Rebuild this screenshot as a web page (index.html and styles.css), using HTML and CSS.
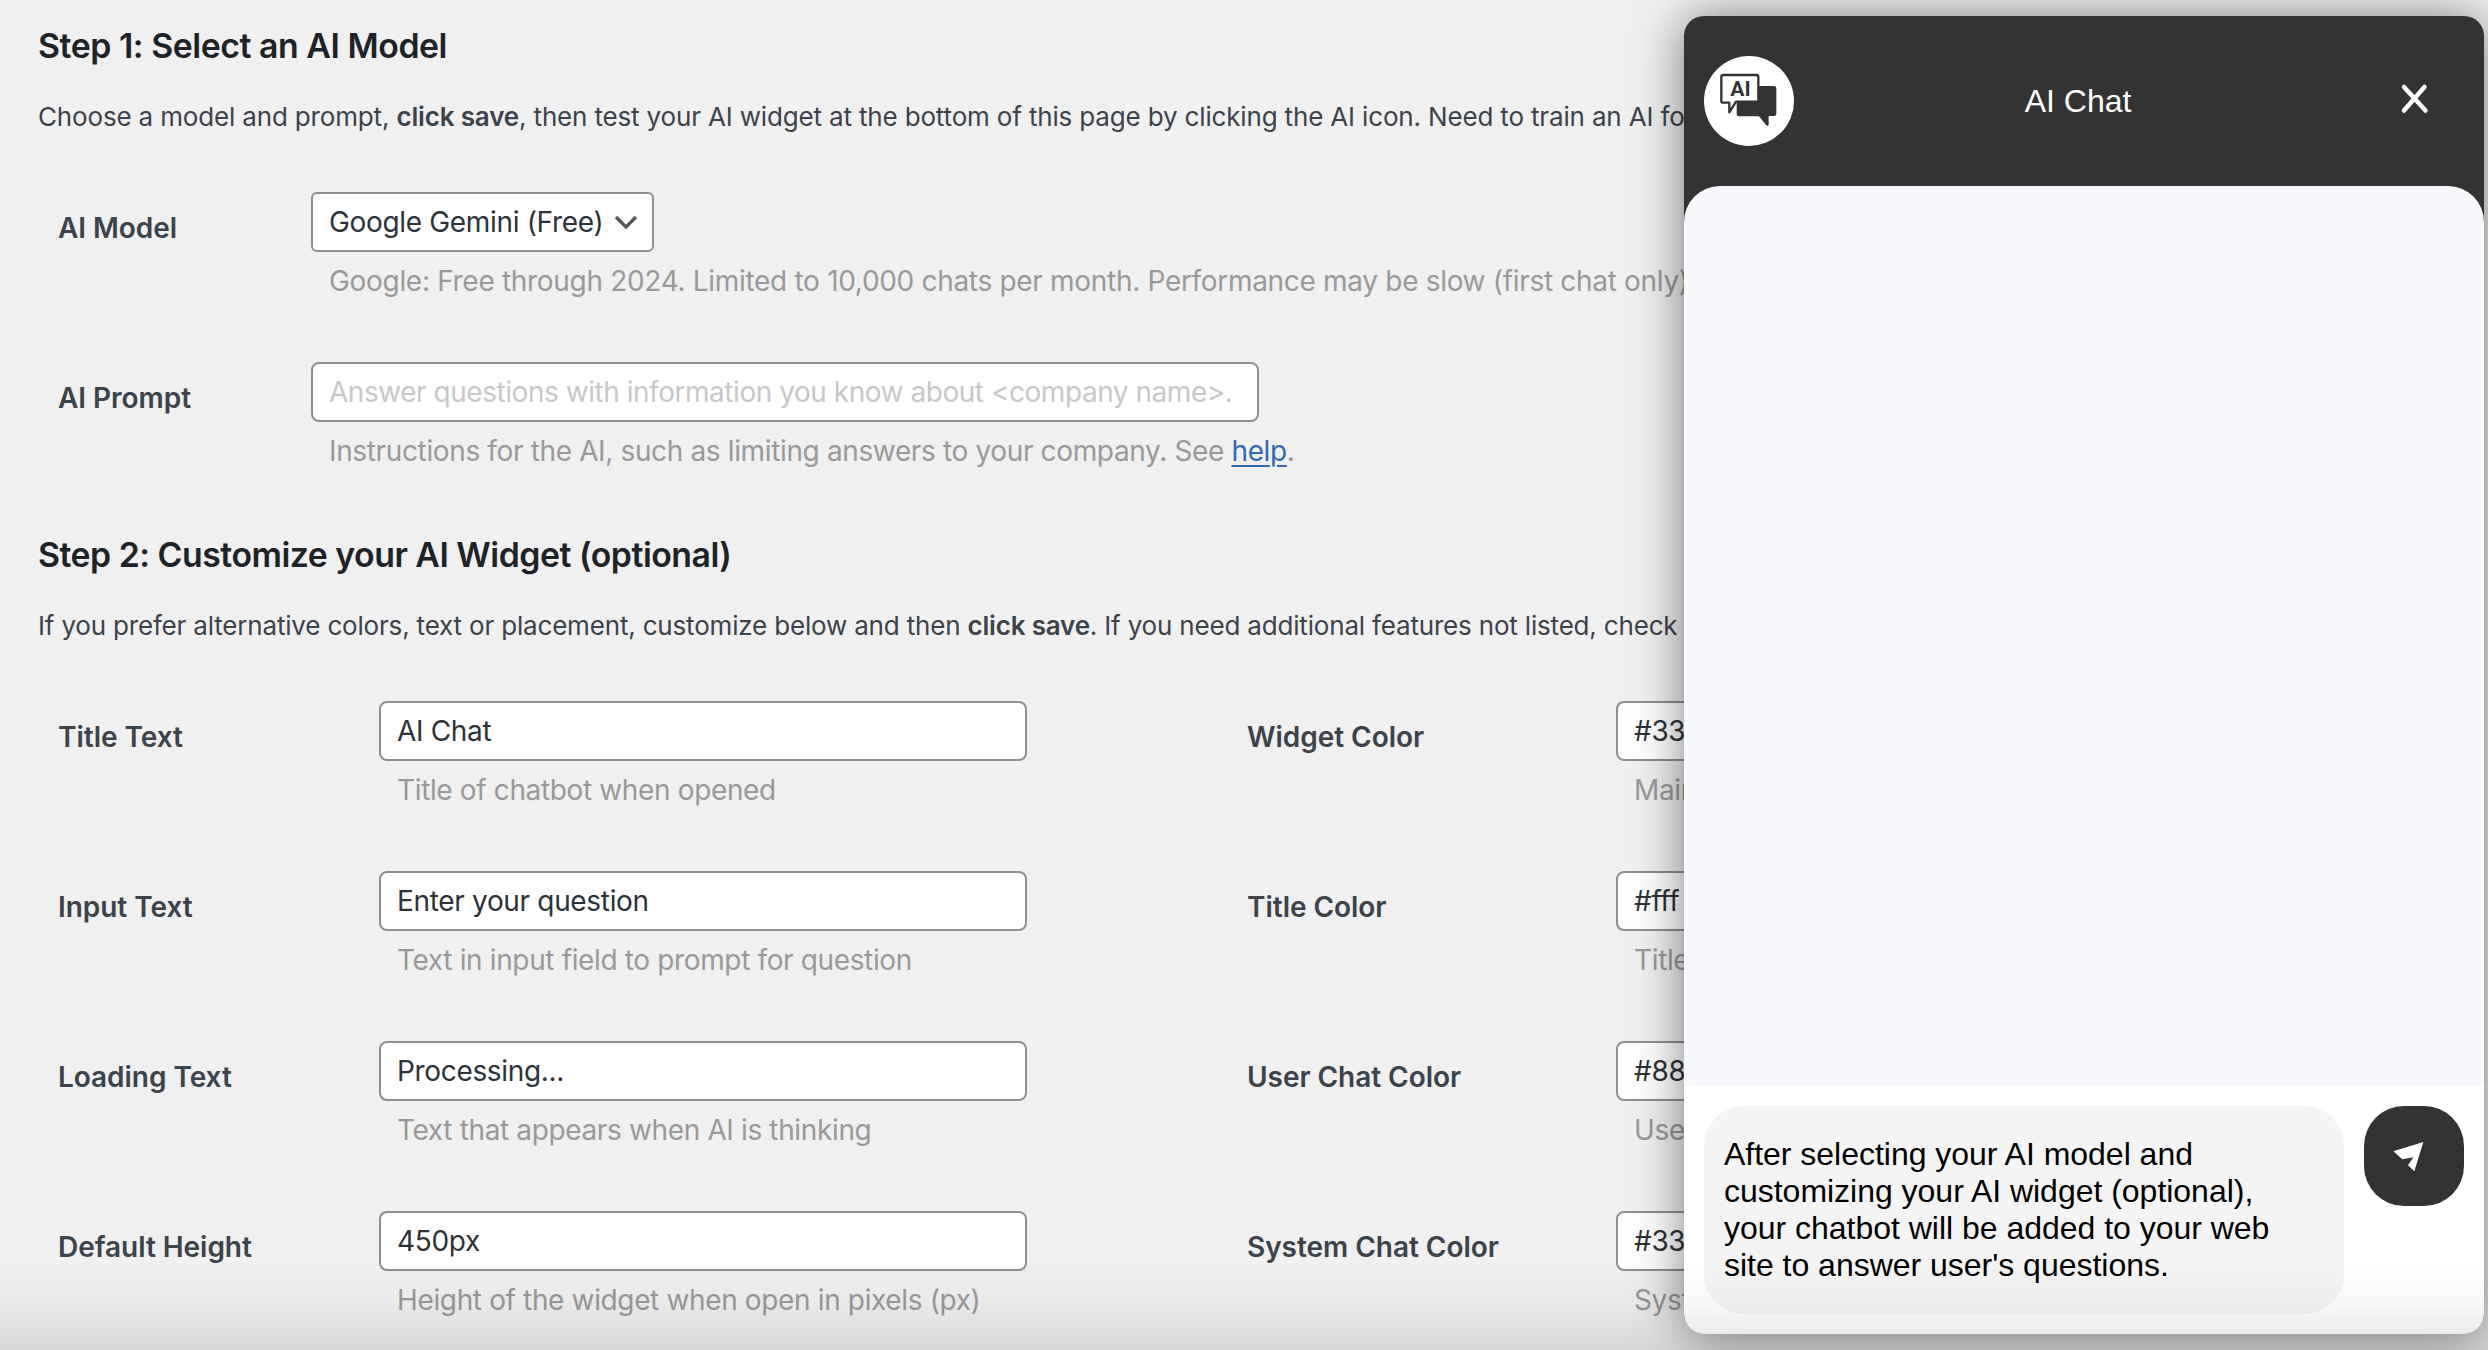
FILE: index.html
```
<!DOCTYPE html>
<html lang="en">
<head>
<meta charset="utf-8">
<title>AI Chat settings</title>
<link rel="stylesheet" href="styles.css">
</head>
<body>
<main class="settings">
  <section class="step step-one">
    <h2 class="step-title step-title-one">Step 1: Select an AI Model</h2>
    <p class="step-intro step-intro-one">Choose a model and prompt, <strong>click save</strong>, then test your AI widget at the bottom of this page by clicking the AI icon. Need to train an AI fo</p>
    <div class="grid grid-single">
      <label class="label">AI Model</label>
      <div class="cell">
        <div class="field select">
          <span>Google Gemini (Free)</span>
          <svg class="chevron" width="24" height="14" viewBox="0 0 24 14"><path d="M2 2 L12 12 L22 2" fill="none" stroke="#555" stroke-width="3.2"/></svg>
        </div>
        <p class="hint hint-model">Google: Free through 2024. Limited to 10,000 chats per month. Performance may be slow (first chat only)</p>
      </div>
      <label class="label">AI Prompt</label>
      <div class="cell">
        <input class="field prompt" placeholder="Answer questions with information you know about &lt;company name&gt;.">
        <p class="hint">Instructions for the AI, such as limiting answers to your company. See <a class="link" href="#">help</a>.</p>
      </div>
    </div>
  </section>

  <section class="step">
    <h2 class="step-title">Step 2: Customize your AI Widget (optional)</h2>
    <p class="step-intro">If you prefer alternative colors, text or placement, customize below and then <strong>click save</strong>. If you need additional features not listed, check</p>
    <div class="grid grid-double">
      <label class="label">Title Text</label>
      <div class="cell"><input class="field" value="AI Chat"><p class="hint">Title of chatbot when opened</p></div>
      <label class="label">Widget Color</label>
      <div class="cell"><input class="field" value="#333"><p class="hint">Main</p></div>

      <label class="label">Input Text</label>
      <div class="cell"><input class="field" value="Enter your question"><p class="hint">Text in input field to prompt for question</p></div>
      <label class="label">Title Color</label>
      <div class="cell"><input class="field" value="#fff"><p class="hint">Title</p></div>

      <label class="label">Loading Text</label>
      <div class="cell"><input class="field" value="Processing..."><p class="hint">Text that appears when AI is thinking</p></div>
      <label class="label">User Chat Color</label>
      <div class="cell"><input class="field" value="#888"><p class="hint">User</p></div>

      <label class="label">Default Height</label>
      <div class="cell"><input class="field" value="450px"><p class="hint">Height of the widget when open in pixels (px)</p></div>
      <label class="label">System Chat Color</label>
      <div class="cell"><input class="field" value="#333"><p class="hint">Syst</p></div>
    </div>
  </section>
</main>

<aside class="chat">
  <header class="chat-header">
    <div class="avatar">
      <svg width="90" height="90" viewBox="42 48 270 270">
        <path fill="#333" d="M206 138 H252 Q259 138 259 145 V221 Q259 228 252 228 H236 V254 Q234 260 229 256 L207 229 H147 Q140 229 140 222 V186 H206 Z"/>
        <path fill="#fff" stroke="#333" stroke-width="7" stroke-linejoin="round" d="M100 105 H199 Q205 105 205 111 V185 H138 L118 217 V188 H100 Q94 188 94 182 V111 Q94 105 100 105 Z"/>
        <text class="avatar-text" x="121" y="169" textLength="61" lengthAdjust="spacingAndGlyphs">AI</text>
      </svg>
    </div>
    <h1 class="chat-title">AI Chat</h1>
    <svg class="close" width="90" height="90" viewBox="0 0 90 90"><path d="M30 31 L51.500 54.500 M50.500 31 L30 54.500" fill="none" stroke="#fff" stroke-width="4.500" stroke-linecap="round"/></svg>
  </header>
  <div class="chat-log"></div>
  <footer class="chat-footer">
    <div class="message">After selecting your AI model and<br>customizing your AI widget (optional),<br>your chatbot will be added to your web<br>site to answer user's questions.</div>
    <div class="send"><svg width="100" height="100" viewBox="72 48 300 300"><path fill="#fff" d="M160 184 L250 156 L223 244 L204 226 L220 202 L187 208 Z"/></svg></div>
  </footer>
</aside>
<div class="fade"></div>
</body>
</html>
```

FILE: styles.css
```
* { box-sizing: border-box; }

body {
  margin: 0;
  width: 2488px;
  height: 1350px;
  overflow: hidden;
  position: relative;
  background: #f0f0f0;
  color: #3c434a;
  font-family: Inter, "Liberation Sans", sans-serif;
}

.settings {
  padding: 24px 0 0 38px;
  height: 1350px;
  overflow: hidden;
}

.step-one { height: 509px; }

.step-title {
  margin: 0 0 29px;
  font-size: 33.8px;
  line-height: 44px;
  font-weight: 600;
  letter-spacing: -0.49px;
  color: #1d2327;
}

.step-title-one { letter-spacing: -0.44px; }

.step-intro {
  margin: 0 0 55px;
  font-size: 26px;
  line-height: 40px;
  letter-spacing: -0.18px;
  white-space: nowrap;
}

.step-intro-one { letter-spacing: -0.16px; }

.step-intro strong { font-weight: 600; }

.grid {
  display: grid;
  grid-auto-rows: 170px;
  padding-left: 20px;
}

.grid-single { grid-template-columns: 253px 1600px; }
.grid-double { grid-template-columns: 321px 868px 369px 648px; }

.label {
  font-size: 28px;
  line-height: 72px;
  font-weight: 600;
  letter-spacing: -0.04px;
}

.field {
  display: block;
  width: 648px;
  height: 60px;
  padding: 0 16px;
  border: 2px solid #8c8f94;
  border-radius: 8px;
  background: #fff;
  color: #2c3338;
  font: 400 28px Inter, "Liberation Sans", sans-serif;
  letter-spacing: -0.33px;
}

.select {
  display: flex;
  align-items: center;
  justify-content: space-between;
  width: 343px;
  padding-right: 14px;
  border-radius: 6px;
  white-space: nowrap;
}

.chevron { flex: none; }

.prompt {
  width: 948px;
  letter-spacing: -0.46px;
}

.field::placeholder { color: #c8c8c8; }

.hint {
  margin: 9px 0 0 18px;
  font-size: 28px;
  line-height: 40px;
  letter-spacing: -0.36px;
  color: #999;
  white-space: nowrap;
}

.hint-model { letter-spacing: -0.31px; }

.link {
  color: #2e6ab1;
  text-underline-offset: 4px;
  text-decoration-thickness: 2px;
}

/* Chat window floating over the settings page */
.chat {
  position: absolute;
  top: 16px;
  right: 4px;
  width: 800px;
  height: 1318px;
  display: flex;
  flex-direction: column;
  overflow: hidden;
  border-radius: 20px;
  background: #333;
  box-shadow: 0 2px 50px rgba(0, 0, 0, 0.5);
  font-family: "Liberation Sans", Arial, sans-serif;
}

.chat-header {
  display: grid;
  grid-template-columns: 90px 1fr 100px;
  align-items: center;
  height: 170px;
  padding: 0 10px 0 20px;
}

.avatar {
  width: 90px;
  height: 90px;
  border-radius: 50%;
  background: #fff;
}

.avatar svg { display: block; }

.avatar-text {
  font: 700 59px Roboto, sans-serif;
  fill: #333;
}

.chat-title {
  margin: 0;
  padding-right: 12px;
  text-align: center;
  font-size: 32px;
  line-height: 40px;
  font-weight: 400;
  color: #fff;
}

.chat-log {
  flex: 1;
  border-radius: 36px 36px 0 0;
  background: #f8f9fd;
}

.chat-footer {
  display: flex;
  align-items: flex-start;
  gap: 20px;
  height: 248px;
  padding: 20px;
  background: #fff;
}

.message {
  width: 640px;
  height: 208px;
  padding: 30px 20px;
  border-radius: 40px;
  background: #f4f4f4;
  color: #000;
  font-size: 32px;
  line-height: 37px;
  letter-spacing: -0.02px;
  white-space: nowrap;
}

.send {
  width: 100px;
  height: 100px;
  border-radius: 40px;
  background: #333;
}

.send svg { display: block; }

/* Soft darkening along the bottom edge of the window */
.fade {
  position: absolute;
  left: 0;
  right: 0;
  bottom: 0;
  height: 90px;
  background: linear-gradient(rgba(0, 0, 0, 0), rgba(0, 0, 0, 0.03) 50%, rgba(0, 0, 0, 0.1));
  pointer-events: none;
}
```
